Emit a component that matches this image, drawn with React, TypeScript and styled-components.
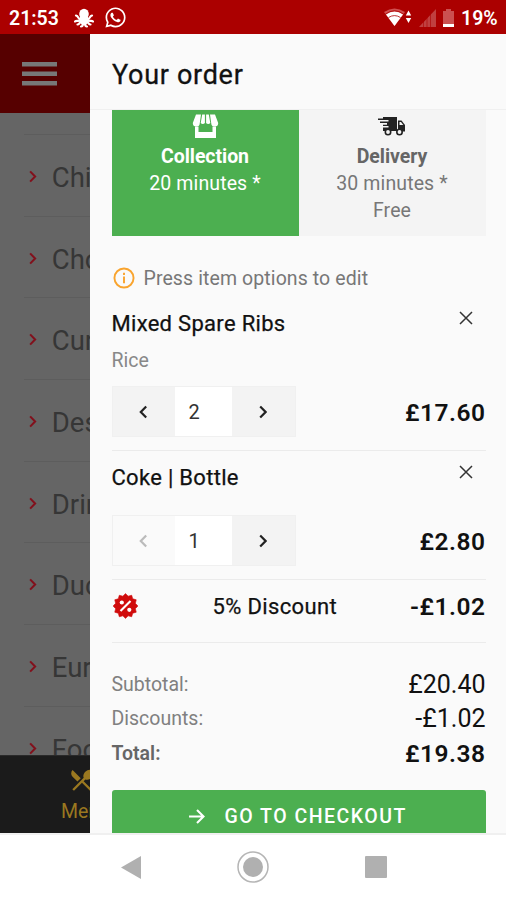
import React from "react";
import styled, { createGlobalStyle, css } from "styled-components";
import { FaWhatsapp } from "react-icons/fa";
import { MdRestaurantMenu } from "react-icons/md";

const Global = createGlobalStyle`
  * { box-sizing: border-box; }
  body { margin: 0; font-family: Roboto, "Liberation Sans", sans-serif; background: #fff; }
  button { font: inherit; border: 0; padding: 0; background: none; }
`;

const Screen = styled.div`
  width: 506px;
  height: 900px;
  display: grid;
  grid-template-rows: 34px 799px 67px;
  overflow: hidden;
`;

const StatusBar = styled.header`
  display: flex;
  align-items: center;
  justify-content: space-between;
  padding: 1px 8px 0 9px;
  background: #ab0000;
  color: #fff;
`;

const StatusGroup = styled.div<{ $gap: number }>`
  display: flex;
  align-items: center;
  gap: ${(p) => p.$gap}px;
`;

const StatusText = styled.span<{ $width: number }>`
  width: ${(p) => p.$width}px;
  padding-top: 2px;
  font-size: 19.5px;
  font-weight: 600;
  line-height: 32px;
  white-space: nowrap;
`;

const Stage = styled.main`
  display: grid;
  grid-template-columns: 90px 416px;
  overflow: hidden;
`;

const Backdrop = styled.aside`
  display: grid;
  grid-template-rows: 79px 642px 78px;
  overflow: hidden;
  background: #656565;
`;

const AppBar = styled.div`
  display: flex;
  align-items: center;
  padding-left: 22px;
  background: #560000;
`;

const Categories = styled.div`
  padding: 21px 0 0 24px;
  overflow: hidden;
`;

const Category = styled.div`
  height: 81.7px;
  display: flex;
  align-items: center;
  gap: 15px;
  padding: 4px 0 0 5px;
  border-top: 1px solid #5d5d5d;
  color: #363636;
  font-size: 27.5px;
  white-space: nowrap;
`;

const TabBar = styled.div`
  display: flex;
  flex-direction: column;
  padding: 10px 0 0 61px;
  gap: 5px;
  background: #1b1b1b;
  border-top: 1px solid #2a2a2a;
  color: #9a7820;
  font-size: 19.5px;
  line-height: 26px;
  white-space: nowrap;
  overflow: hidden;
  svg { margin-left: 7px; flex: none; }
`;

const Drawer = styled.section`
  display: flex;
  flex-direction: column;
  background: #fafafa;
  overflow: hidden;
`;

const DrawerTitle = styled.h1`
  flex: none;
  height: 76px;
  margin: 0;
  padding: 2px 0 0 22px;
  border-bottom: 1px solid #f0f0f0;
  font-size: 27px;
  font-weight: 400;
  line-height: 78px;
  letter-spacing: 0.7px;
  color: #111;
  -webkit-text-stroke: 0.3px #111;
`;

const Content = styled.div`
  flex: 1;
  padding: 0 20.5px 0 21.5px;
  display: flex;
  flex-direction: column;
`;

const Methods = styled.div`
  flex: none;
  display: grid;
  grid-template-columns: 1fr 1fr;
  height: 126px;
`;

const Method = styled.button<{ $active?: boolean }>`
  display: flex;
  flex-direction: column;
  align-items: center;
  justify-content: flex-start;
  padding-top: 2px;
  font-size: 19.5px;
  line-height: 27px;
  letter-spacing: 0.12px;
  color: ${(p) => (p.$active ? "#fff" : "#777")};
  background: ${(p) => (p.$active ? "#4caf50" : "#f4f4f4")};
  strong { font-weight: 700; letter-spacing: -0.05px; color: ${(p) => (p.$active ? "#fff" : "#666")}; }
  svg { flex: none; height: 28px; margin-bottom: 3px; color: ${(p) => (p.$active ? "#fff" : "#222")}; }
`;

const Hint = styled.p`
  display: flex;
  align-items: center;
  gap: 9px;
  height: 30px;
  margin: 27px 0 0;
  padding-left: 1px;
  font-size: 19.5px;
  letter-spacing: 0.1px;
  color: #777;
`;

const Item = styled.article<{ $height: number }>`
  flex: none;
  height: ${(p) => p.$height}px;
  border-bottom: 1px solid #ebebeb;
  display: flex;
  flex-direction: column;
  padding-bottom: 13px;
`;

const ItemHead = styled.div<{ $top: number }>`
  display: flex;
  justify-content: space-between;
  align-items: flex-start;
  padding: ${(p) => p.$top}px 13px 0 0;
  svg { margin-top: 2px; }
`;

const strongish = css`
  color: #111;
  -webkit-text-stroke: 0.25px #111;
`;

const ItemName = styled.h2`
  margin: 0;
  font-size: 22px;
  font-weight: 400;
  line-height: 30px;
  letter-spacing: 0.3px;
  ${strongish}
`;

const ItemOption = styled.div`
  font-size: 19.5px;
  line-height: 26px;
  margin-top: 9px;
  color: #888;
`;

const ItemFoot = styled.div`
  margin-top: auto;
  display: flex;
  justify-content: space-between;
  align-items: center;
`;

const Stepper = styled.div`
  display: grid;
  grid-template-columns: 62px 57px 63px;
  height: 51px;
  border: 1px solid #f0f0f0;
  width: 184px;
`;

const StepButton = styled.button<{ $off?: boolean }>`
  display: flex;
  align-items: center;
  justify-content: center;
  background: ${(p) => (p.$off ? "#fafafa" : "#f3f3f3")};
  color: ${(p) => (p.$off ? "#bbb" : "#222")};
`;

const Quantity = styled.div`
  background: #fff;
  padding: 2px 0 0 14px;
  font-size: 20px;
  line-height: 46px;
  color: #333;
`;

const Price = styled.span<{ $light?: boolean }>`
  font-size: ${(p) => (p.$light ? 25 : 24.5)}px;
  font-weight: ${(p) => (p.$light ? 400 : 600)};
  letter-spacing: ${(p) => (p.$light ? 0 : 0.5)}px;
  color: #111;
`;

const ItemPrice = styled(Price)`
  padding-top: 2px;
`;

const Discount = styled.div`
  flex: none;
  display: grid;
  grid-template-columns: 101px 1fr auto;
  align-items: center;
  height: 63px;
  padding-bottom: 9px;
  border-bottom: 1px solid #ebebeb;
  svg { margin-bottom: 2px; }
`;

const DiscountName = styled.span`
  font-size: 22px;
  letter-spacing: 0.35px;
  ${strongish}
`;

const Totals = styled.dl`
  flex: none;
  margin: 24px 0 0;
`;

const TotalRow = styled.div<{ $bold?: boolean }>`
  height: 34.5px;
  display: flex;
  justify-content: space-between;
  align-items: center;
  font-size: 19.5px;
  font-weight: ${(p) => (p.$bold ? 600 : 400)};
  color: ${(p) => (p.$bold ? "#666" : "#808080")};
`;

const Checkout = styled.button`
  flex: none;
  display: flex;
  align-items: center;
  gap: 20px;
  height: 53px;
  margin-top: 19px;
  padding-left: 77px;
  border-radius: 3px;
  background: #4caf50;
  color: #fff;
  font-size: 19.5px;
  font-weight: 500;
  letter-spacing: 1.5px;
  white-space: nowrap;
`;

const NavBar = styled.nav`
  display: flex;
  align-items: center;
  padding: 0 0 1px 121px;
  gap: 96px;
  border-top: 2px solid #f0f0f0;
  background: #fff;
`;

const Octopus = () => (
  <svg width="20" height="20" viewBox="0 0 20 20" fill="none" stroke="#fff" strokeWidth="2.2" strokeLinecap="round">
    <ellipse cx="10" cy="6" rx="4.800" ry="5.300" fill="#fff" stroke="none" />
    <path d="M6 9h8l1 4-3 4H8l-3-4z" fill="#fff" stroke="none" />
    <path d="M6 11C4 11 4.500 8 2 7.500M6 12.500c-2 1-3.500-.5-5 1M7.500 14c-2 0-2 2.500-4 2.500M9 15.500c0 2-1 3-2 3M14 11c2 0 1.500-3 4-3.500M14 12.500c2 1 3.500-.5 5 1M12.500 14c2 0 2 2.500 4 2.500M11 15.500c0 2 1 3 2 3" />
  </svg>
);

const Wifi = () => (
  <svg width="28" height="19" viewBox="0 0 28 19">
    <path d="M0 4Q10.500-3 21 4L10.500 18Z" fill="#d05050" />
    <path d="M2 6.500Q10.500 0.500 19 6.500L10.500 18Z" fill="#fff" />
    <path d="M1.500 6Q10.500-.5 19.500 6M4.500 9.500Q10.500 5.700 16.500 9.500" fill="none" stroke="#ab0000" strokeWidth=".8" />
    <path d="M21.800 7.500l2.700-5 2.700 5zM21.800 10h5.400l-2.700 5z" fill="#fff" />
  </svg>
);

const Signal = () => (
  <svg width="17" height="18" viewBox="0 0 17 18">
    <path d="M0 18L17 0V18Z" fill="#c04040" />
    <path d="M4.500 11v7M8 8v10M11.500 5v13" stroke="#ab0000" strokeWidth=".6" />
  </svg>
);

const Battery = () => (
  <svg width="11" height="20" viewBox="0 0 11 20">
    <path d="M0 3h3V1h5v2h3v13H0z" fill="#cb5050" />
    <path d="M0 16h11v3H0z" fill="#fff" />
  </svg>
);

const Menu = () => (
  <svg width="35" height="24" viewBox="0 0 35 24" fill="#777">
    <path d="M0 0h35v4.500H0zM0 9.500h35V14H0zM0 19h35v4.500H0z" />
  </svg>
);

const Chevron = ({ left, size = 14, weight = 2.2 }: { left?: boolean; size?: number; weight?: number }) => (
  <svg width={size * 0.6} height={size} viewBox="0 0 8.400 14" fill="none" stroke="currentColor" strokeWidth={weight}>
    <path d={left ? "M7.200 1.500L1.800 7l5.400 5.500" : "M1.200 1.500L6.600 7l-5.400 5.500"} />
  </svg>
);

const RedChevron = styled.span`
  display: flex;
  color: #82101c;
  padding-bottom: 2px;
`;

const Store = () => (
  <svg width="27" height="24" viewBox="0 0 27 24" fill="currentColor">
    <path d="M4 .5h5L7.800 9a3.500 3.500 0 0 1-7 0zM10.200 .5h2.700V9a2.700 2.700 0 0 1-4.200 0zM14.100 .5h2.700L18.300 9a2.700 2.700 0 0 1-4.200 0zM18 .5h5L26.200 9a3.500 3.500 0 0 1-7 0z" />
    <path d="M3 12.500h3.500V18h14v-5.500H24V24H3z" />
  </svg>
);

const Truck = () => (
  <svg width="28" height="20" viewBox="0 0 28 20" fill="currentColor">
    <path d="M5 1h14v14H5V11.500h5.500V10H5V8.800h4V7H2V5.400h8.500V4H0V2.500h5z" />
    <path d="M20 4.500h3.500L27 9v6.500h-7z" />
    <path d="M21.500 6h1.500l2.300 3h-3.800z" fill="#f4f4f4" />
    <g fill="#f4f4f4" stroke="currentColor" strokeWidth="1.600">
      <circle cx="10" cy="16" r="2.700" /><circle cx="21.500" cy="16" r="2.700" />
    </g>
  </svg>
);

const Info = () => (
  <svg width="22" height="22" viewBox="0 0 23 23" fill="none" stroke="#f9a42e" strokeWidth="2">
    <circle cx="11.500" cy="11.500" r="10" />
    <path d="M11.500 10v7M11.500 6v2.300" />
  </svg>
);

const Close = () => (
  <svg width="14" height="14" viewBox="0 0 14 14" fill="none" stroke="#333" strokeWidth="1.500">
    <path d="M1 1l12 12M13 1L1 13" />
  </svg>
);

const badgePoints = Array.from({ length: 24 }, (_, i) => {
  const r = i % 2 ? 10.2 : 12.4;
  const a = (i * Math.PI) / 12;
  return `${13.5 + r * Math.sin(a)},${13 - r * Math.cos(a)}`;
}).join(" ");

const PercentBadge = () => (
  <svg width="27" height="26" viewBox="0 0 27 26">
    <polygon points={badgePoints} fill="#d00c0c" stroke="#d00c0c" strokeLinejoin="round" strokeWidth=".6" />
    <path d="M8.500 18l10-10" stroke="#fff" strokeWidth="2.200" />
    <circle cx="9.800" cy="9.500" r="2.100" fill="#fff" /><circle cx="17.300" cy="16.800" r="2.100" fill="#fff" />
  </svg>
);

const Arrow = () => (
  <svg width="16" height="15" viewBox="0 0 17 16" fill="none" stroke="currentColor" strokeWidth="2.2">
    <path d="M0 8h15M8.500 1l7 7-7 7" />
  </svg>
);

const categories = ["Chicken", "Chow Mein", "Curry", "Desserts", "Drinks", "Duck", "European", "Foo Yung"];

function QuantityStepper({ value }: { value: number }) {
  return (
    <Stepper>
      <StepButton $off={value === 1} aria-label="Less"><Chevron left /></StepButton>
      <Quantity>{value}</Quantity>
      <StepButton aria-label="More"><Chevron /></StepButton>
    </Stepper>
  );
}

export default function App() {
  return (
    <Screen>
      <Global />
      <StatusBar>
        <StatusGroup $gap={10}>
          <StatusText $width={55}>21:53</StatusText>
          <Octopus />
          <FaWhatsapp size={23} />
        </StatusGroup>
        <StatusGroup $gap={7}>
          <Wifi />
          <Signal />
          <Battery />
          <StatusText $width={37}>19%</StatusText>
        </StatusGroup>
      </StatusBar>
      <Stage>
        <Backdrop>
          <AppBar><Menu /></AppBar>
          <Categories>
            {categories.map((c) => (
              <Category key={c}><RedChevron><Chevron size={13} /></RedChevron>{c}</Category>
            ))}
          </Categories>
          <TabBar><MdRestaurantMenu size={28} />Menu</TabBar>
        </Backdrop>
        <Drawer>
          <DrawerTitle>Your order</DrawerTitle>
          <Content>
            <Methods>
              <Method $active><Store /><strong>Collection</strong><span>20 minutes *</span></Method>
              <Method><Truck /><strong>Delivery</strong><span>30 minutes *</span><span>Free</span></Method>
            </Methods>
            <Hint><Info />Press item options to edit</Hint>
            <Item $height={158}>
              <ItemHead $top={16}><ItemName>Mixed Spare Ribs</ItemName><Close /></ItemHead>
              <ItemOption>Rice</ItemOption>
              <ItemFoot><QuantityStepper value={2} /><ItemPrice>£17.60</ItemPrice></ItemFoot>
            </Item>
            <Item $height={129}>
              <ItemHead $top={12}><ItemName>Coke | Bottle</ItemName><Close /></ItemHead>
              <ItemFoot><QuantityStepper value={1} /><ItemPrice>£2.80</ItemPrice></ItemFoot>
            </Item>
            <Discount><PercentBadge /><DiscountName>5% Discount</DiscountName><Price>-£1.02</Price></Discount>
            <Totals>
              <TotalRow>Subtotal:<Price $light>£20.40</Price></TotalRow>
              <TotalRow>Discounts:<Price $light>-£1.02</Price></TotalRow>
              <TotalRow $bold>Total:<Price>£19.38</Price></TotalRow>
            </Totals>
            <Checkout><Arrow />GO TO CHECKOUT</Checkout>
          </Content>
        </Drawer>
      </Stage>
      <NavBar>
        <svg width="20" height="23" viewBox="0 0 21 24" fill="#b0b0b0"><path d="M0 12L21 0v24z" /></svg>
        <svg width="32" height="32" viewBox="0 0 32 32"><circle cx="16" cy="16" r="15" fill="none" stroke="#b5b5b5" strokeWidth="1.500" /><circle cx="16" cy="16" r="10" fill="#b0b0b0" /></svg>
        <svg width="22" height="22" viewBox="0 0 22 22"><rect width="22" height="22" rx="1" fill="#b0b0b0" /></svg>
      </NavBar>
    </Screen>
  );
}
